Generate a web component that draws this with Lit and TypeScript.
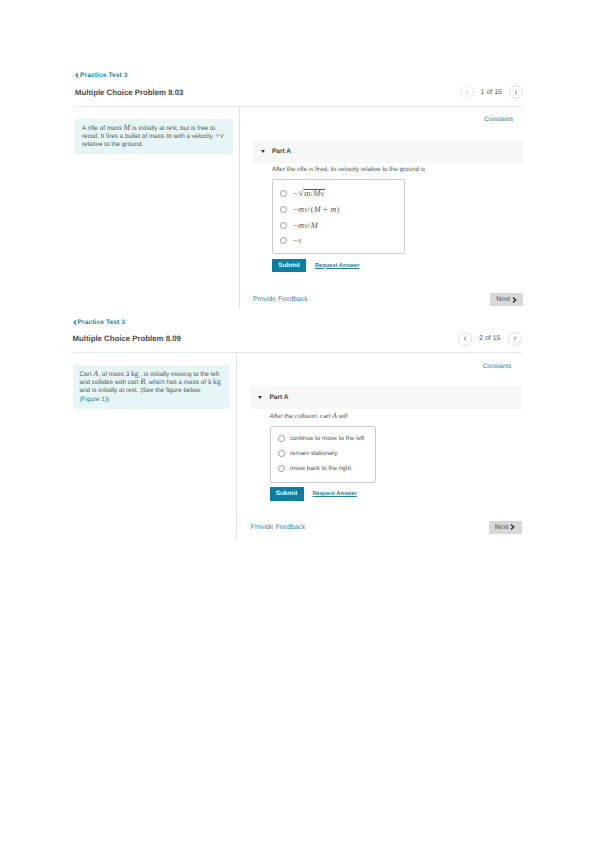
import { LitElement, html, css, svg } from "lit";
import { customElement, property } from "lit/decorators.js";

const chev = (left: boolean, weight = 1.8) => svg`<svg class="chev" viewBox="0 0 8 10" width="4" height="5"><path d="${left ? "M6.5 1 2 5l4.5 4" : "M1.5 1 6 5 1.5 9"}" fill="none" stroke="currentColor" stroke-width="${weight}"/></svg>`;

@customElement("prob-block")
class ProbBlock extends LitElement {
  @property() title = "";
  @property() counter = "";
  @property({ type: Boolean }) prevActive = false;

  static styles = css`
    :host { display: block; font-family: "Liberation Sans", Arial, sans-serif; color: #444; text-rendering: geometricPrecision; }
    .crumb { display: flex; align-items: center; gap: 1px; height: 10px; font-size: 6.6px; font-weight: 700; color: #2a7f97; letter-spacing: 0.1px; }
    .chev { display: block; }
    .head { display: flex; align-items: center; justify-content: space-between; height: 18px; margin-top: var(--head-top, 3px); }
    .title { font-size: 7.8px; font-weight: 700; color: #4a4a4a; }
    .pager { display: flex; align-items: center; gap: 7px; font-size: 7px; color: #555; }
    .pg { width: 14px; height: 14px; box-sizing: border-box; border: 1px solid #ddd; border-radius: 50%; display: flex; align-items: center; justify-content: center; color: #777; }
    .pg.off { color: #bbb; border-color: #e8e8e8; }
    .cols { display: flex; border-top: 1px solid #e8e8e8; margin-top: var(--head-gap, 5px); }
    .left { width: 164.5px; flex: none; box-sizing: border-box; padding-top: 12px; border-right: 1px solid #e2e2e2; padding-right: 6px; }
    .right { flex: 1; min-width: 0; }
    .info { background: #e6f5f5; padding: 6px 7px 5px 7px; font-size: 6.35px; line-height: 8.1px; color: #555; }
  `;

  render() {
    return html`
      <div class="crumb">${chev(true, 2.6)}<span>Practice Test 3</span></div>
      <div class="head">
        <div class="title">${this.title}</div>
        <div class="pager">
          <span class="pg ${this.prevActive ? "" : "off"}">${chev(true)}</span>
          <span>${this.counter}</span>
          <span class="pg">${chev(false)}</span>
        </div>
      </div>
      <div class="cols">
        <div class="left"><div class="info"><slot name="info"></slot></div></div>
        <div class="right"><slot></slot></div>
      </div>
    `;
  }
}

@customElement("part-panel")
class PartPanel extends LitElement {
  @property({ type: Number }) boxWidth = 133;
  static styles = css`
    :host { display: block; font-family: "Liberation Sans", Arial, sans-serif; color: #555; padding-left: 13px; text-rendering: geometricPrecision; }
    .constants { text-align: right; padding: var(--const-pad, 9px) 10px 0 0; height: 13px; font-size: 6.4px; line-height: 8px; color: #2a7a90; }
    .bar { display: flex; align-items: center; height: 23px; margin-top: var(--bar-top, 11px); background: #f7f7f7; font-size: 6.6px; font-weight: 700; color: #444; }
    .tri { width: 0; height: 0; margin: 0 7.4px 0 8px; border-left: 2.8px solid transparent; border-right: 2.8px solid transparent; border-top: 3.2px solid #333; }
    .body { padding-left: 19.5px; }
    .q { margin-top: var(--q-top, 2px); height: 10px; font-size: 6.2px; line-height: 10px; color: #555; }
    .box { box-sizing: border-box; margin-top: 4px; border: 1px solid #ccc; border-radius: 2px; }
    .actions { display: flex; align-items: center; gap: 9px; margin-top: var(--act-top, 5px); }
    .submit { width: 34px; height: 13.5px; background: #0f7d9f; color: #dff; font-size: 6.4px; font-weight: 700; display: flex; align-items: center; justify-content: center; }
    .req { font-size: 5.7px; font-weight: 700; color: #2a7f97; text-decoration: underline; }
    .foot { display: flex; align-items: center; justify-content: space-between; margin-top: var(--foot-gap, 20px); margin-bottom: var(--foot-bottom, 2px); }
    .fb { font-size: 6.8px; color: #3e8097; padding-left: 0.5px; }
    .next { width: 33px; height: 13.5px; background: #d8d8d8; color: #555; font-size: 6.8px; display: flex; align-items: center; justify-content: center; gap: 1.5px; }
    .next .chev { display: block; color: #333; width: 5px; height: 6px; }
  `;
  render() {
    return html`
      <div class="constants">Constants</div>
      <div class="bar"><span class="tri"></span>Part A</div>
      <div class="body">
        <div class="q"><slot name="q"></slot></div>
        <div class="box" style="width:${this.boxWidth}px"><slot></slot></div>
        <div class="actions"><div class="submit">Submit</div><div class="req">Request Answer</div></div>
      </div>
      <div class="foot">
        <div class="fb">Provide Feedback</div>
        <div class="next">Next ${chev(false, 2.4)}</div>
      </div>
    `;
  }
}

@customElement("app-root")
class AppRoot extends LitElement {
  static styles = css`
    :host { display: block; font-family: "Liberation Sans", Arial, sans-serif; min-height: 842px; background: #fff; padding-top: 70px; box-sizing: border-box; text-rendering: geometricPrecision; }
    .one { margin-left: 75px; width: 448px; --foot-gap: 20.5px; }
    .two { margin-left: 72.5px; width: 449px; margin-top: 9.5px; --head-top: 2px; --head-gap: 4.5px; --const-pad: 10px; --bar-top: 10px; --q-top: 3px; --act-top: 4px; --foot-gap: 20px; --foot-bottom: 6px; }
    .m { font-family: "Liberation Serif", serif; font-style: italic; font-size: 8px; line-height: 0; }
    .rm { font-family: "Liberation Serif", serif; font-size: 7.6px; line-height: 0; }
    .link { color: #2a7f97; }
    .opts1 { padding: 6px 0 4px 7px; }
    .opts2 { padding: 4px 0 6.6px 7px; }
    .row { display: flex; align-items: center; gap: 6px; }
    .opts1 .row { height: 15.7px; }
    .opts2 .row { height: 14.8px; gap: 5.5px; font-size: 6.2px; color: #555; }
    .radio { width: 5px; height: 5px; flex: none; border: 0.8px solid #999; border-radius: 50%; background: #fff; box-sizing: content-box; }
    .mo { font-family: "Liberation Serif", serif; font-size: 8.4px; color: #555; letter-spacing: 0.2px; }
    .mo i { font-style: italic; }
    .root { font-size: 10.5px; }
    .ov { border-top: 0.7px solid #555; line-height: 8px; display: inline-block; }
    .it { font-style: italic; }
  `;
  render() {
    return html`
      <prob-block class="one" title="Multiple Choice Problem 8.03" counter="1 of 15">
        <div slot="info">A rifle of mass <span class="m">M</span> is initially at rest, but is free to recoil. It fires a bullet of mass <span class="m">m</span> with a velocity <span class="m">+v</span> relative to the ground.</div>
        <part-panel .boxWidth=${133}>
          <span slot="q">After the rifle is fired, its velocity relative to the ground is</span>
          <div class="opts1">
            <div class="row"><span class="radio"></span><span class="mo">−<span class="root">√</span><span class="ov">m/<i>M</i>v</span></span></div>
            <div class="row"><span class="radio"></span><span class="mo">−<i>mv</i>/(<i>M</i> + <i>m</i>)</span></div>
            <div class="row"><span class="radio"></span><span class="mo">−<i>mv</i>/<i>M</i></span></div>
            <div class="row"><span class="radio"></span><span class="mo">−<i>v</i></span></div>
          </div>
        </part-panel>
      </prob-block>
      <prob-block class="two" prevActive title="Multiple Choice Problem 8.09" counter="2 of 15">
        <div slot="info">Cart <span class="m">A</span>, of mass 3 <span class="rm">kg</span> , is initially moving to the left and collides with cart <span class="m">B</span>, which has a mass of 9 <span class="rm">kg</span> and is initially at rest. (See the figure below.<br /><span class="link">(Figure 1)</span>)</div>
        <part-panel .boxWidth=${106}>
          <span slot="q" class="it">After the collision, cart <span class="m">A</span> will</span>
          <div class="opts2">
            <div class="row"><span class="radio"></span><span>continue to move to the left</span></div>
            <div class="row"><span class="radio"></span><span>remain stationary.</span></div>
            <div class="row"><span class="radio"></span><span>move back to the right.</span></div>
          </div>
        </part-panel>
      </prob-block>
    `;
  }
}
